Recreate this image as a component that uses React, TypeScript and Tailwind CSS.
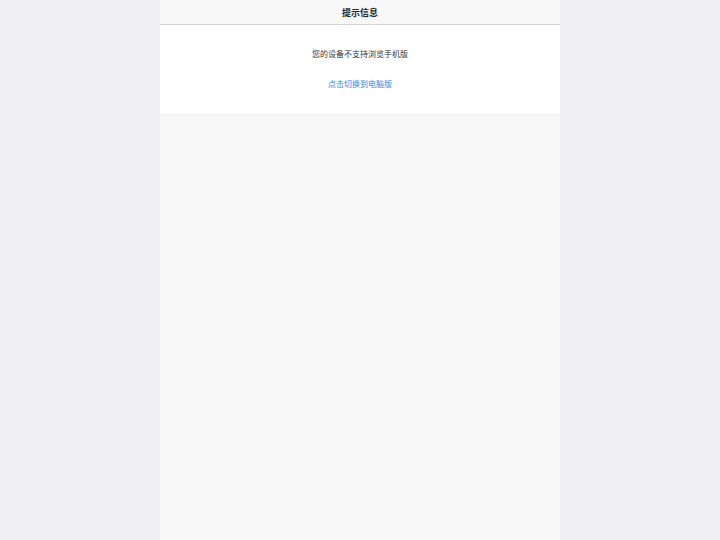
export default function App() {
  return (
    <div
      className="flex min-h-[540px] justify-center bg-[#efeff4]"
      style={{ fontFamily: '"Liberation Sans", "Noto Sans CJK SC", sans-serif' }}
    >
      <div className="w-[400px] min-h-[540px] bg-[#f8f8f8]">
        <header className="h-[25px] border-b border-[#d6d6d6] bg-[#f8f8f8] text-center">
          <h1 className="pt-[1px] text-[9px] font-bold leading-[24px] text-[#222]">提示信息</h1>
        </header>

        <section className="h-[88px] bg-white text-center">
          <p className="pt-[26px] text-[8px] leading-[8px] text-[#333]">您的设备不支持浏览手机版</p>
          <p className="mt-[22px] text-[8px] leading-[8px]">
            <a href="#" className="text-[#2f86dd]">
              点击切换到电脑版
            </a>
          </p>
        </section>
      </div>
    </div>
  );
}
